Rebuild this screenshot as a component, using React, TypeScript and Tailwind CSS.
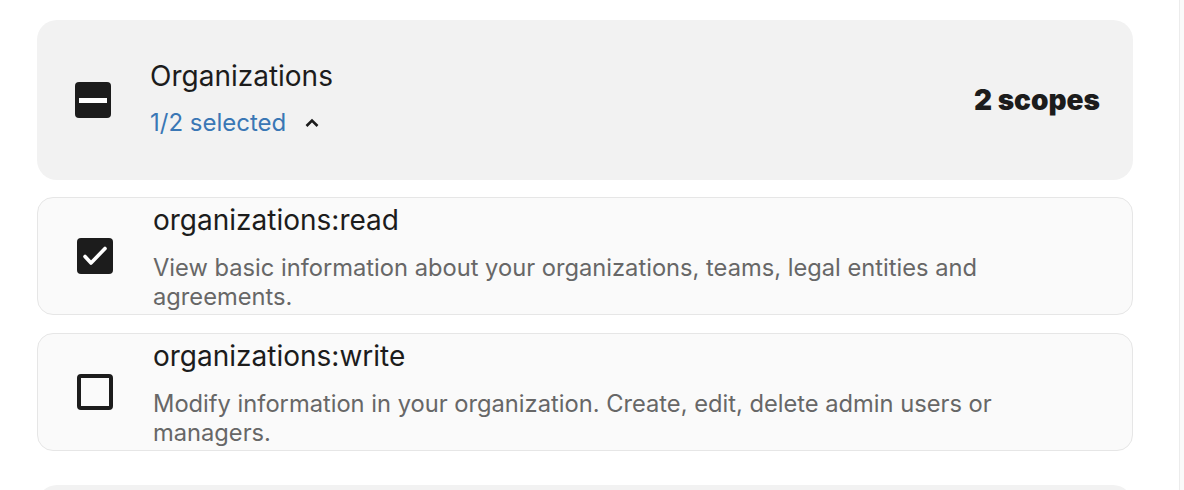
import React from "react";

const scopes = [
  {
    name: "organizations:read",
    desc: "View basic information about your organizations, teams, legal entities and agreements.",
    checked: true,
  },
  {
    name: "organizations:write",
    desc: "Modify information in your organization. Create, edit, delete admin users or managers.",
    checked: false,
  },
];

function Box({ state }: { state: "checked" | "mixed" | "empty" }) {
  if (state === "empty") {
    return <div className="w-9 h-9 shrink-0 rounded-[4px] border-[4px] border-[#1c1c1c]" />;
  }
  return (
    <div className="w-9 h-9 shrink-0 rounded-[4px] bg-[#1c1c1c] flex items-center justify-center">
      {state === "mixed" ? (
        <div className="w-[28px] h-[5px] bg-white" />
      ) : (
        <svg width="36" height="36" viewBox="0 0 36 36" fill="none">
          <path d="M8 18.5l6 6.5L28 10.5" stroke="white" strokeWidth="3.6" strokeLinecap="round" strokeLinejoin="round" />
        </svg>
      )}
    </div>
  );
}

export default function App() {
  return (
    <div className="w-[1184px] h-[490px] overflow-hidden bg-white flex font-['Inter',sans-serif] text-[#1c1c1c]">
      <div className="w-[1180px] border-r border-[#ececec] pl-[37px] pt-5">
        <div className="w-[1096px] flex flex-col">
          <div className="h-[160px] rounded-[20px] bg-[#f2f2f2] flex items-center pl-[38px] pr-[33px]">
            <Box state="mixed" />
            <div className="ml-[39px] flex flex-col gap-[13px] pb-[3px]">
              <span className="text-[28px] leading-9">Organizations</span>
              <div className="flex items-center gap-[18px] text-[24px] leading-8 text-[#3a77b5]">
                <span>1/2 selected</span>
                <svg width="16" height="10" viewBox="0 0 16 10" fill="none">
                  <path d="M2.5 8L8 2.5 13.5 8" stroke="#1c1c1c" strokeWidth="2.6" />
                </svg>
              </div>
            </div>
            <span className="ml-auto text-[28px] font-black">2 scopes</span>
          </div>

          <div className="mt-[17px] flex flex-col gap-[18px]">
            {scopes.map((s) => (
              <div
                key={s.name}
                className="h-[118px] overflow-hidden rounded-[16px] border border-[#e6e6e6] bg-[#fafafa] flex items-center pl-[39px]"
              >
                <Box state={s.checked ? "checked" : "empty"} />
                <div className="ml-[40px] self-start pt-[4px] flex flex-col">
                  <span className="text-[28px] leading-9">{s.name}</span>
                  <p className="mt-[15px] text-[23.7px] leading-[29px] text-[#676767] max-w-[900px]">{s.desc}</p>
                </div>
              </div>
            ))}
          </div>

          <div className="mt-[34px] h-[80px] rounded-[20px] bg-[#f2f2f2]" />
        </div>
      </div>
      <div className="flex-1 bg-[#fafafa]" />
    </div>
  );
}
